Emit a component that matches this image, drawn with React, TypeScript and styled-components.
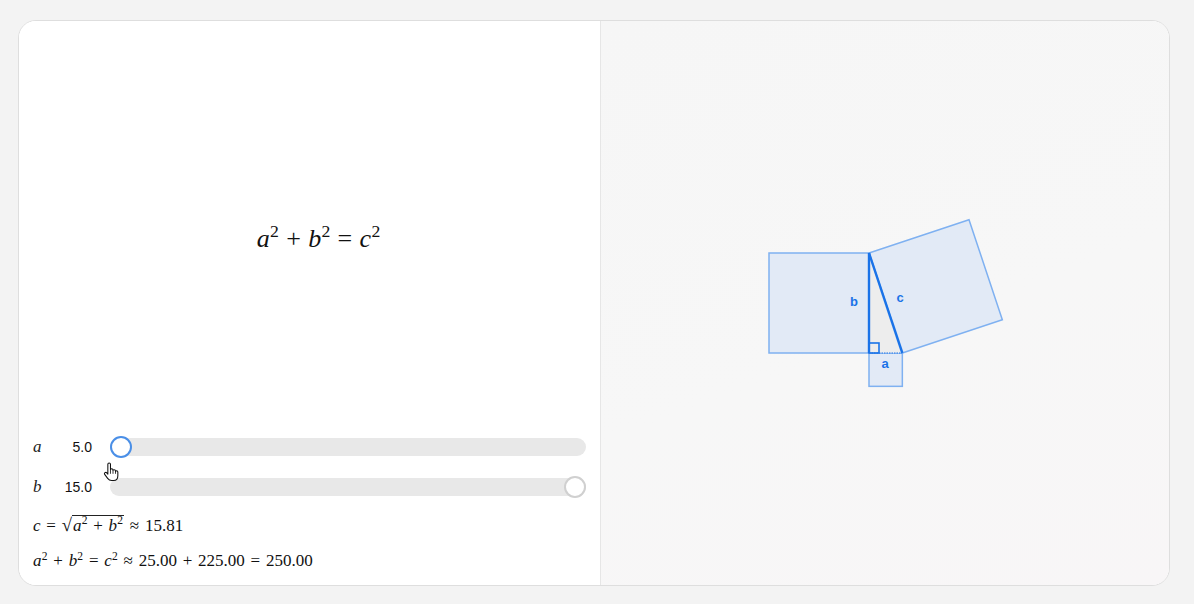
import React, { useState } from "react";
import styled, { createGlobalStyle } from "styled-components";

const GlobalStyle = createGlobalStyle`
  html, body {
    margin: 0;
    padding: 0;
    background: #f3f3f3;
  }
  body {
    font-family: "Liberation Sans", Arial, sans-serif;
  }
`;

const Page = styled.div`
  padding: 20px 24px 18px 18px;
`;

const Card = styled.div`
  width: 1150px;
  height: 564px;
  border: 1px solid #dedede;
  border-radius: 18px;
  background: #ffffff;
  overflow: hidden;
  display: grid;
  grid-template-columns: 582px 1fr;
`;

const LeftPanel = styled.div`
  display: flex;
  flex-direction: column;
  padding: 0 14px 6px 14px;
  border-right: 1px solid #e6e6e6;
  background: #ffffff;
`;

const FormulaArea = styled.div`
  flex: 1;
  display: flex;
  align-items: center;
  justify-content: center;
  padding: 30px 0 0 18px;
`;

const MathText = styled.span<{ $size?: number; $gap?: number }>`
  font-family: "Liberation Serif", "Times New Roman", serif;
  font-size: ${(p) => p.$size || 17}px;
  color: #111;
  white-space: nowrap;

  .op {
    margin: 0 ${(p) => p.$gap || 0.34}em;
  }
`;

const V = styled.i`
  font-style: italic;
`;

const Op = styled.span.attrs({ className: "op" })``;

const Sup = styled.sup`
  font-size: 0.68em;
  font-style: normal;
  vertical-align: 0.55em;
  line-height: 0;
  margin-left: 0.02em;
`;

const Radical = styled.span`
  display: inline-flex;
  align-items: flex-start;
`;

const RadSign = styled.span`
  font-size: 1.1em;
  margin-top: -1px;
`;

const RadBody = styled.span`
  border-top: 1px solid #222;
  padding: 1px 1px 0 1px;
  line-height: 1.05;
`;

const SliderRow = styled.div`
  display: grid;
  grid-template-columns: 19px 40px 1fr;
  align-items: center;
  height: 40px;
`;

const VarLabel = styled.i`
  font-family: "Liberation Serif", "Times New Roman", serif;
  font-size: 17px;
  color: #222;
`;

const ValueText = styled.span`
  font-size: 14px;
  color: #111;
  text-align: right;
`;

const Track = styled.div`
  position: relative;
  height: 18px;
  margin-left: 18px;
  border-radius: 9px;
  background: #e8e8e8;
`;

const Thumb = styled.div<{ $active?: boolean }>`
  position: absolute;
  top: -2px;
  width: 18px;
  height: 18px;
  border-radius: 50%;
  background: #fff;
  border: 2px solid ${(p) => (p.$active ? "#4a8fe7" : "#d0d0d0")};
  transform: translateX(-11px);
`;

const Pointer = styled.svg`
  position: absolute;
  left: -8px;
  top: 24px;
  z-index: 2;
`;

const FormulaLine = styled.div`
  height: 36px;
  display: flex;
  align-items: center;
  color: #222;
`;

const RightPanel = styled.div`
  display: flex;
  align-items: center;
  justify-content: center;
  padding-left: 2px;
  background: linear-gradient(160deg, #f6f6f6 0%, #f7f7f7 55%, #f8f6f7 100%);
`;

const Label = styled.text`
  font-family: "Liberation Sans", Arial, sans-serif;
  font-size: 13px;
  font-weight: 700;
  fill: #1a73e8;
  text-anchor: middle;
`;

const HandCursor = () => (
  <Pointer width="18" height="20" viewBox="0 0 16 19">
    <path
      d="M5 2.2C5 1.4 5.6 1 6.2 1C6.9 1 7.5 1.4 7.5 2.2V7.2C7.7 6.6 8.2 6.4 8.7 6.4C9.4 6.4 9.9 6.9 9.9 7.6V8C10.1 7.5 10.6 7.3 11.1 7.3C11.8 7.3 12.3 7.8 12.3 8.5V9C12.5 8.6 12.9 8.4 13.3 8.4C14 8.4 14.5 8.9 14.5 9.6V13C14.5 15.5 13 17.5 10.5 17.5H8.5C6.8 17.5 5.8 16.8 4.8 15.5L2 11.8C1.6 11.2 1.7 10.5 2.3 10.1C2.9 9.7 3.6 9.9 4 10.4L5 11.6Z"
      fill="#fff"
      stroke="#111"
      strokeWidth="1"
      strokeLinejoin="round"
    />
    <path d="M9.9 8.2V11.2M12.3 9V11.2M7.5 7.2V11.2" stroke="#111" strokeWidth="0.8" fill="none" />
  </Pointer>
);

const Slider: React.FC<{
  name: string;
  value: number;
  min: number;
  max: number;
  active?: boolean;
}> = ({ name, value, min, max, active }) => {
  const pct = (value - min) / (max - min);
  return (
    <SliderRow>
      <VarLabel>{name}</VarLabel>
      <ValueText>{value.toFixed(1)}</ValueText>
      <Track>
        <Thumb
          $active={active}
          style={{ left: `calc(11px + (100% - 22px) * ${pct})` }}
        />
        {active && <HandCursor />}
      </Track>
    </SliderRow>
  );
};

const Diagram: React.FC<{ a: number; b: number }> = ({ a, b }) => {
  const s = 20 / 3;
  const A = a * s;
  const B = b * s;
  // right-angle corner
  const ox = 103;
  const oy = 136;
  const top = [ox, oy - B];
  const right = [ox + A, oy];
  const c1 = [right[0] + B, right[1] - A];
  const c2 = [top[0] + B, top[1] - A];
  const sq = "rgba(66,133,244,0.11)";
  const sqStroke = "#7fb1f1";
  const blue = "#1a73e8";
  return (
    <svg width="240" height="173" viewBox="0 0 240 173">
      <rect x={ox - B} y={oy - B} width={B} height={B} fill={sq} stroke={sqStroke} strokeWidth="1.5" />
      <rect x={ox} y={oy} width={A} height={A} fill={sq} stroke={sqStroke} strokeWidth="1.5" />
      <polygon
        points={`${top.join(",")} ${right.join(",")} ${c1.join(",")} ${c2.join(",")}`}
        fill={sq}
        stroke={sqStroke}
        strokeWidth="1.5"
      />
      <polygon
        points={`${ox},${oy} ${top.join(",")} ${right.join(",")}`}
        fill="#ededed"
        stroke="none"
      />
      <line x1={ox} y1={oy} x2={right[0]} y2={right[1]} stroke={blue} strokeWidth="1" strokeDasharray="1.5 1" />
      <line x1={ox} y1={oy} x2={top[0]} y2={top[1]} stroke={blue} strokeWidth="2.4" />
      <line x1={top[0]} y1={top[1]} x2={right[0]} y2={right[1]} stroke={blue} strokeWidth="2.4" />
      <rect x={ox} y={oy - 10} width="10" height="10" fill="none" stroke={blue} strokeWidth="1.6" />
      <Label x={ox - 15} y={oy - 47}>b</Label>
      <Label x={ox + 31} y={oy - 51}>c</Label>
      <Label x={ox + 16} y={oy + 15}>a</Label>
    </svg>
  );
};

const App: React.FC = () => {
  const [a] = useState(5);
  const [b] = useState(15);
  const c = Math.sqrt(a * a + b * b);

  return (
    <Page>
      <GlobalStyle />
      <Card>
        <LeftPanel>
          <FormulaArea>
            <MathText $size={26} $gap={0.28}>
              <V>a</V>
              <Sup>2</Sup>
              <Op>+</Op>
              <V>b</V>
              <Sup>2</Sup>
              <Op>=</Op>
              <V>c</V>
              <Sup>2</Sup>
            </MathText>
          </FormulaArea>
          <Slider name="a" value={a} min={5} max={20} active />
          <Slider name="b" value={b} min={1} max={15} />
          <FormulaLine>
            <MathText>
              <V>c</V>
              <Op>=</Op>
              <Radical>
                <RadSign>√</RadSign>
                <RadBody>
                  <V>a</V>
                  <Sup>2</Sup>
                  <Op>+</Op>
                  <V>b</V>
                  <Sup>2</Sup>
                </RadBody>
              </Radical>
              <Op>≈</Op>
              {c.toFixed(2)}
            </MathText>
          </FormulaLine>
          <FormulaLine>
            <MathText>
              <V>a</V>
              <Sup>2</Sup>
              <Op>+</Op>
              <V>b</V>
              <Sup>2</Sup>
              <Op>=</Op>
              <V>c</V>
              <Sup>2</Sup>
              <Op>≈</Op>
              {(a * a).toFixed(2)}
              <Op>+</Op>
              {(b * b).toFixed(2)}
              <Op>=</Op>
              {(a * a + b * b).toFixed(2)}
            </MathText>
          </FormulaLine>
        </LeftPanel>
        <RightPanel>
          <Diagram a={a} b={b} />
        </RightPanel>
      </Card>
    </Page>
  );
};

export default App;
